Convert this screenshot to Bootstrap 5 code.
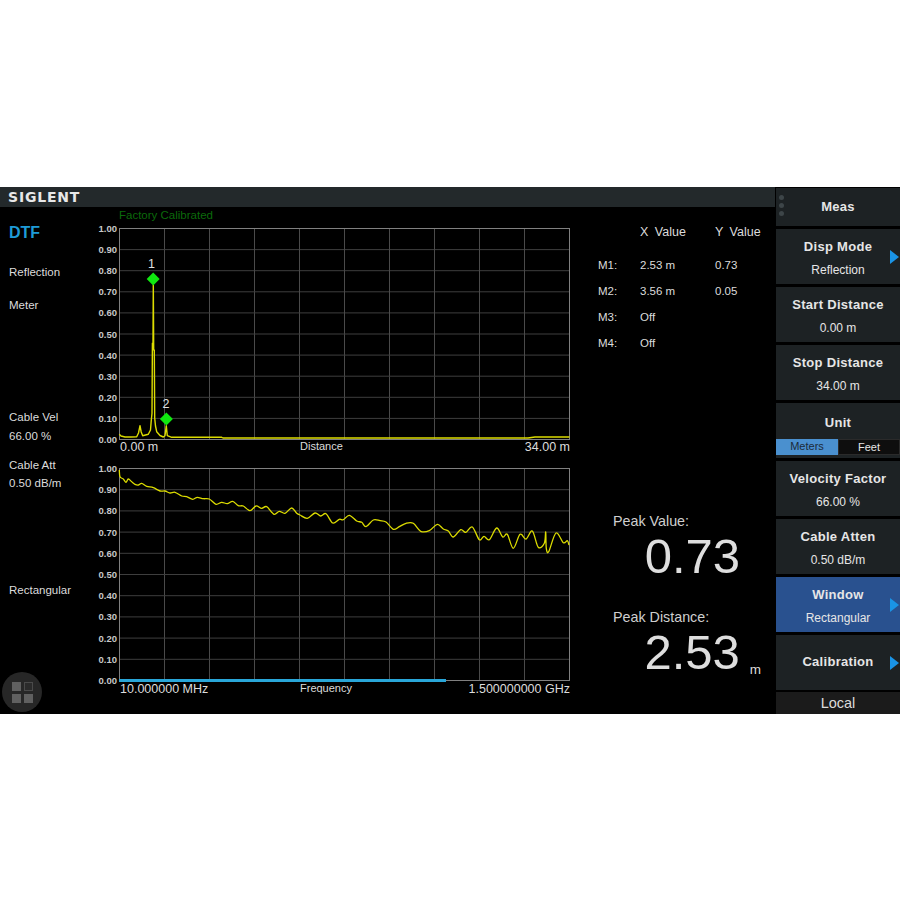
<!DOCTYPE html>
<html lang="en">
  <head>
    <meta charset="UTF-8" />
    <meta name="viewport" content="width=device-width, initial-scale=1.0" />
    <title>SIGLENT DTF</title>
    <link href="https://cdn.jsdelivr.net/npm/bootstrap@5.3.0/dist/css/bootstrap.min.css" rel="stylesheet" />
    <style>
      body {
        background: #fff;
        padding-top: 187px;
        font-family: "Liberation Sans", Arial, sans-serif;
      }
      .screen {
        height: 527px;
        background: #000;
        color: #dcdcdc;
        font-size: 11.5px;
        line-height: 16px;
      }
      .main-area { width: 775px; }
      .top-bar { height: 20px; background: #23292b; padding-left: 8px; }
      .logo {
        font-family: "DejaVu Sans", sans-serif;
        font-weight: 700;
        font-size: 14px;
        line-height: 21px;
        letter-spacing: .8px;
        color: #e8e8e8;
      }
      .side-labels { width: 100px; padding: 16px 0 2px 9px; }
      .dtf { font-size: 16px; line-height: 20px; font-weight: 700; color: #1e9bd7; }
      .mt-21 { margin-top: 21px; }
      .mt-17 { margin-top: 17px; }
      .mt-96 { margin-top: 96px; }
      .mt-3px { margin-top: 3px; }
      .mt-13 { margin-top: 13px; }
      .mt-2px { margin-top: 2px; }
      .mt-91 { margin-top: 91px; }
      .apps-btn {
        width: 40px;
        height: 40px;
        margin: auto 0 0 -7px;
        border-radius: 50%;
        background: #272727;
        display: grid;
        grid-template-columns: 9px 9px;
        grid-template-rows: 9px 9px;
        gap: 3px;
        align-content: center;
        justify-content: center;
      }
      .apps-btn span { background: #606060; }
      .apps-btn span:nth-child(2) { background: #2b2b2b; border: 1px solid #4a4a4a; }
      .charts { width: 472px; }
      .factory { height: 15px; line-height: 16px; padding-left: 19px; color: #0b6a0b; }
      .charts svg { display: block; overflow: visible; }
      .chart-gap { margin-top: 7px; }
      .charts text { font-family: "Liberation Sans", Arial, sans-serif; }
      .readout { width: 203px; padding-top: 17px; }
      .marker-table {
        display: grid;
        grid-template-columns: 42px 75px auto;
        row-gap: 10px;
        padding-left: 26px;
      }
      .marker-head { margin-bottom: 7px; word-spacing: 3px; font-size: 12.5px; }
      .peak-label { font-size: 14.3px; line-height: 18px; padding-left: 41px; color: #cfcfcf; }
      .peak-value {
        font-size: 49px;
        line-height: 50px;
        margin-top: 1px;
        color: #dedede;
      }
      .peak-one { margin-top: 161px; }
      .peak-two { margin-top: 27px; }
      .peak-row-a { padding-right: 35px; }
      .peak-row-b { padding-right: 14px; }
      .unit-m { font-size: 13.5px; line-height: 16px; margin-left: 10px; margin-bottom: -1px; }
      .menu { width: 124px; margin-left: 1px; padding-top: 1px; }
      .softkey {
        position: relative;
        height: 55px;
        margin-bottom: 3px;
        background: #1d2224;
        color: #e6e6e6;
        text-align: center;
      }
      .softkey-title { font-size: 13px; line-height: 18px; font-weight: 700; letter-spacing: .3px; margin-top: 1px; }
      .softkey-value { font-size: 12px; line-height: 16px; margin-top: 6px; }
      .softkey.short { height: 38px; }
      .softkey.short .softkey-title { margin-top: 0; }
      .softkey.active { background: #29518f; }
      .softkey.has-arrow::after {
        content: "";
        position: absolute;
        right: 1px;
        top: 50%;
        transform: translateY(-50%);
        border-left: 9px solid #1a94e6;
        border-top: 7px solid transparent;
        border-bottom: 7px solid transparent;
      }
      .softkey.tall-title .softkey-title { margin-top: -2px; }
      .grip {
        position: absolute;
        left: 3px;
        top: 7px;
        display: grid;
        gap: 3px;
      }
      .grip span { width: 5px; height: 5px; border-radius: 50%; background: #3d4548; }
      .unit-key { padding-top: 10px; }
      .unit-switch {
        position: absolute;
        left: 0;
        right: 0;
        bottom: 3px;
        height: 16px;
        font-size: 11px;
        line-height: 15px;
      }
      .unit-on { width: 62px; background: #4a90cf; color: #1c2b3a; }
      .unit-off { flex: 1; background: #0e0e0e; color: #e6e6e6; border: 1px solid #2a2a2a; }
      .local-key {
        height: 22px;
        margin-top: -1px;
        background: #1b1b1b;
        color: #dcdcdc;
        text-align: center;
        font-size: 14.5px;
        line-height: 22px;
      }
    </style>
  </head>
  <body>
    <div class="screen d-flex">
      <div class="main-area d-flex flex-column">
        <div class="top-bar"><span class="logo">SIGLENT</span></div>
        <div class="d-flex flex-grow-1">
          <div class="side-labels d-flex flex-column">
            <div class="dtf">DTF</div>
            <div class="mt-21">Reflection</div>
            <div class="mt-17">Meter</div>
            <div class="mt-96">Cable Vel</div>
            <div class="mt-3px">66.00 %</div>
            <div class="mt-13">Cable Att</div>
            <div class="mt-2px">0.50 dB/m</div>
            <div class="mt-91">Rectangular</div>
            <div class="apps-btn"><span></span><span></span><span></span><span></span></div>
          </div>

          <div class="charts">
            <div class="factory">Factory Calibrated</div>
            <svg id="chartTop" width="472" height="233" viewBox="100 222 472 233"></svg>
            <svg id="chartBottom" class="chart-gap" width="472" height="235" viewBox="100 462 472 235"></svg>
          </div>

          <div class="readout">
            <div class="marker-table">
              <div class="marker-head"></div>
              <div class="marker-head">X Value</div>
              <div class="marker-head">Y Value</div>
              <div>M1:</div><div>2.53 m</div><div>0.73</div>
              <div>M2:</div><div>3.56 m</div><div>0.05</div>
              <div>M3:</div><div>Off</div><div></div>
              <div>M4:</div><div>Off</div><div></div>
            </div>
            <div class="peak-label peak-one">Peak Value:</div>
            <div class="d-flex justify-content-end peak-row-a">
              <div class="peak-value">0.73</div>
            </div>
            <div class="peak-label peak-two">Peak Distance:</div>
            <div class="d-flex justify-content-end align-items-end peak-row-b">
              <div class="peak-value">2.53</div>
              <div class="unit-m">m</div>
            </div>
          </div>
        </div>
      </div>

      <div class="menu">
        <div class="softkey short d-flex align-items-center justify-content-center">
          <div class="grip"><span></span><span></span><span></span></div>
          <div class="softkey-title">Meas</div>
        </div>
        <div class="softkey has-arrow pt-2">
          <div class="softkey-title">Disp Mode</div>
          <div class="softkey-value">Reflection</div>
        </div>
        <div class="softkey pt-2">
          <div class="softkey-title">Start Distance</div>
          <div class="softkey-value">0.00 m</div>
        </div>
        <div class="softkey pt-2">
          <div class="softkey-title">Stop Distance</div>
          <div class="softkey-value">34.00 m</div>
        </div>
        <div class="softkey unit-key">
          <div class="softkey-title">Unit</div>
          <div class="unit-switch d-flex">
            <div class="unit-on">Meters</div>
            <div class="unit-off">Feet</div>
          </div>
        </div>
        <div class="softkey pt-2">
          <div class="softkey-title">Velocity Factor</div>
          <div class="softkey-value">66.00 %</div>
        </div>
        <div class="softkey pt-2">
          <div class="softkey-title">Cable Atten</div>
          <div class="softkey-value">0.50 dB/m</div>
        </div>
        <div class="softkey active has-arrow pt-2">
          <div class="softkey-title">Window</div>
          <div class="softkey-value">Rectangular</div>
        </div>
        <div class="softkey tall-title has-arrow d-flex align-items-center justify-content-center">
          <div class="softkey-title">Calibration</div>
        </div>
        <div class="local-key">Local</div>
      </div>
    </div>

    <script>
      const LEFT = 119.5;
      const RIGHT = 569.5;
      const YELLOW = "#dcdc00";

      const distanceTrace = [
        [119.3,434.3],[121,436],[125,437],[131,437],[136.7,436.7],[138.5,433],[140,425.7],[141.2,432],[142.7,435.7],
        [148.3,434.3],[150.5,430],[151.3,420],[152,413.3],[152.4,343.3],[153,343.3],[153.3,285],[153.7,350],[154.3,350],
        [154.7,418],[155.5,426],[156.7,431.7],[160,435.5],[163.3,437],[165,435.7],[166.3,425.7],[167.3,435.7],
        [171.7,437.3],[221.7,437.3],[223,438],[528,438],[535,437],[569.5,437]
      ];
      const freqTrace = [
        [119.3,470],[120,476.7],[123.3,479],[126,482.3],[128.3,479],[131.7,481.7],[135,484.3],[138.3,485],[141.7,483.3],
        [146.7,486.3],[153.3,487.7],[160,491],[165,491],[170,493],[175,492.3],[181.7,496],[186.7,496.7],[192.7,499.3],
        [197.3,497.3],[203.3,498.7],[209.3,499],[216,504.3],[221.7,502.3],[227.3,503.7],[232.7,501.3],[238.3,505.7],
        [243.3,506],[250,510.7],[256,506],[261.7,508.3],[266.7,506.7],[274,514.3],[279.3,511.3],[285,513.3],[291.7,508],
        [296.7,513.3],[300,515],[307.3,518.3],[315,513],[320.7,516],[326,513.7],[332.7,523],[339.3,519.3],[343.3,519.7],
        [349.3,515.3],[356.7,521],[361.7,522.3],[366,526.7],[373.3,520],[380,520.7],[386,522],[393.3,529.3],[399.3,526.7],
        [406,523.3],[413.3,523.3],[420.7,531.3],[429.3,530.7],[437.3,524.3],[443.3,529],[448.3,531],[453.3,537],
        [460.7,529.7],[465.7,532.3],[472.3,527],[479.3,539.7],[484,536.3],[489.3,539.7],[496.7,528],[502.7,537],
        [507.3,534.3],[513.3,548.3],[520,534.3],[526,539],[532.3,531],[538.3,547.3],[544.3,543.3],[545.7,532],
        [546.3,548.3],[548.7,551.7],[556,533],[563.3,542.7],[567.3,540.7],[569,545]
      ];

      function plotFrame(top, bottom) {
        let out = "";
        const step = (bottom - top) / 10;
        for (let i = 1; i < 10; i++) {
          const x = LEFT + i * 45;
          out += `<line x1="${x}" y1="${top}" x2="${x}" y2="${bottom}" stroke="#4a4a4a"/>`;
          const y = top + i * step;
          out += `<line x1="${LEFT}" y1="${y}" x2="${RIGHT}" y2="${y}" stroke="#3e3e3e"/>`;
        }
        out += `<rect x="${LEFT}" y="${top}" width="${RIGHT - LEFT}" height="${bottom - top}" fill="none" stroke="#808080"/>`;
        for (let i = 0; i <= 10; i++) {
          const y = top + i * step + 3.5;
          out += `<text x="117" y="${y}" text-anchor="end" font-size="9.5" font-weight="700" fill="#c8c8c8">${(1 - i / 10).toFixed(2)}</text>`;
        }
        return out;
      }

      function axisLabels(y, left, middle, right) {
        return `<text x="120" y="${y}" font-size="12.5" fill="#dcdcdc">${left}</text>` +
          `<text x="300" y="${y - 1}" font-size="11" fill="#dcdcdc">${middle}</text>` +
          `<text x="570" y="${y}" text-anchor="end" font-size="12.5" fill="#dcdcdc">${right}</text>`;
      }

      function trace(points, width) {
        return `<polyline points="${points.join(" ")}" fill="none" stroke="${YELLOW}" stroke-width="${width}" stroke-linejoin="round"/>`;
      }

      // catmull-rom through the points, the slow trace looks rounded on screen
      function smoothTrace(points, width) {
        let d = `M${points[0]}`;
        for (let i = 0; i < points.length - 1; i++) {
          const p0 = points[Math.max(i - 1, 0)];
          const p1 = points[i];
          const p2 = points[i + 1];
          const p3 = points[Math.min(i + 2, points.length - 1)];
          const c1 = [p1[0] + (p2[0] - p0[0]) / 6, p1[1] + (p2[1] - p0[1]) / 6];
          const c2 = [p2[0] - (p3[0] - p1[0]) / 6, p2[1] - (p3[1] - p1[1]) / 6];
          d += ` C${c1} ${c2} ${p2}`;
        }
        return `<path d="${d}" fill="none" stroke="${YELLOW}" stroke-width="${width}"/>`;
      }

      function marker(x, y, label, labelX) {
        return `<polygon points="${x},${y - 6.5} ${x + 6.5},${y} ${x},${y + 6.5} ${x - 6.5},${y}" fill="#10e810"/>` +
          `<text x="${labelX}" y="${y - 11}" text-anchor="middle" font-size="12.5" fill="#e0e0e0">${label}</text>`;
      }

      document.getElementById("chartTop").innerHTML =
        plotFrame(228.5, 439.5) +
        trace(distanceTrace, 1.4) +
        marker(153.2, 279, "1", 151.5) +
        marker(166.4, 419, "2", 166) +
        axisLabels(451, "0.00 m", "Distance", "34.00 m");

      document.getElementById("chartBottom").innerHTML =
        plotFrame(468.5, 680.5) +
        smoothTrace(freqTrace, 1.3) +
        `<rect x="119" y="679" width="327" height="3" fill="#29a6d8"/>` +
        axisLabels(693, "10.000000 MHz", "Frequency", "1.500000000 GHz");
    </script>
    <script src="https://cdn.jsdelivr.net/npm/bootstrap@5.3.0/dist/js/bootstrap.bundle.min.js"></script>
  </body>
</html>
